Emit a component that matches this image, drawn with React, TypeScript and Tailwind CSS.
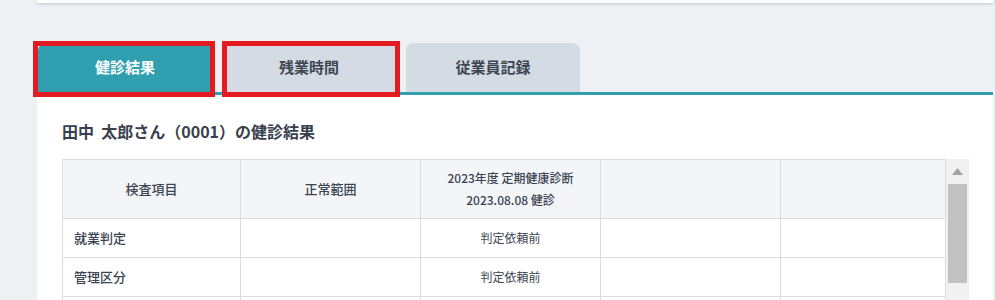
import React from "react";

const tabs = [
  { title: "健診結果", active: true },
  { title: "残業時間", active: false },
  { title: "従業員記録", active: false },
];

const rows = [
  { item: "就業判定", range: "", result: "判定依頼前" },
  { item: "管理区分", range: "", result: "判定依頼前" },
  { item: "", range: "", result: "" },
];

export default function App() {
  return (
    <div
      className="min-h-screen overflow-hidden bg-[#eef1f4] pl-[37px] pr-[2px] text-[#3a4350]"
      style={{ fontFamily: '"Noto Sans CJK JP", "Noto Sans", sans-serif' }}
    >
      {/* previous card (cut off at the top) */}
      <div className="h-[3px] bg-white shadow-[0_1px_3px_rgba(0,0,0,0.18)]" />

      {/* Tabs */}
      <div className="relative mt-[40px]">
        <div className="flex gap-[10px] border-b-[3px] border-[#30a0b0] pl-[1px]">
          {tabs.map((tab, i) => (
            <button
              key={i}
              type="button"
              className={`h-[49px] w-[174px] rounded-t-lg text-[15px] font-bold ${
                tab.active ? "bg-[#30a0b0] text-white" : "bg-[#d5dbe3] text-[#3d4652]"
              }`}
            >
              {tab.title}
            </button>
          ))}
        </div>
        {/* red annotation frames */}
        <div className="pointer-events-none absolute left-[-4px] top-[-2px] h-[56px] w-[182px] border-[5px] border-[#e41b23]" />
        <div className="pointer-events-none absolute left-[185px] top-[-2px] h-[56px] w-[178px] border-[5px] border-[#e41b23]" />
      </div>

      {/* Content card */}
      <div className="bg-white pl-[25px] pr-[24px] pt-[24px]">
        <h2 className="text-[16px] font-bold leading-[24px] whitespace-pre text-[#37404c]">
          田中  太郎さん（0001）の健診結果
        </h2>

        <div className="mt-[16px] flex">
          <table className="w-[883px] table-fixed border-collapse text-[13px]">
            <colgroup>
              <col className="w-[178px]" />
              <col className="w-[180px]" />
              <col className="w-[180px]" />
              <col className="w-[180px]" />
              <col className="w-[165px]" />
            </colgroup>
            <thead>
              <tr className="h-[59px] bg-[#f3f5f8] font-medium">
                <th className="border border-[#d9dde3] font-medium">検査項目</th>
                <th className="border border-[#d9dde3] font-medium">正常範囲</th>
                <th className="border border-[#d9dde3] text-[12px] font-medium leading-[22px]">
                  2023年度 定期健康診断
                  <br />
                  2023.08.08 健診
                </th>
                <th className="border border-[#d9dde3]" />
                <th className="border border-[#d9dde3]" />
              </tr>
            </thead>
            <tbody>
              {rows.map((row, i) => (
                <tr key={i} className="h-[39px]">
                  <td className="border border-[#d9dde3] pl-[11px] font-medium">{row.item}</td>
                  <td className="border border-[#d9dde3]">{row.range}</td>
                  <td className="border border-[#d9dde3] text-center text-[12px]">{row.result}</td>
                  <td className="border border-[#d9dde3]" />
                  <td className="border border-[#d9dde3]" />
                </tr>
              ))}
            </tbody>
          </table>

          {/* vertical scrollbar */}
          <div className="flex w-[24px] flex-col bg-[#f1f1f1]">
            <div className="flex h-[25px] items-center justify-center">
              <svg width="11" height="7" viewBox="0 0 11 7">
                <polygon points="5.5,0 11,7 0,7" fill="#a3a3a3" />
              </svg>
            </div>
            <div className="mx-[2px] h-[99px] bg-[#c1c1c1]" />
            <div className="flex-1" />
          </div>
        </div>
      </div>
    </div>
  );
}
